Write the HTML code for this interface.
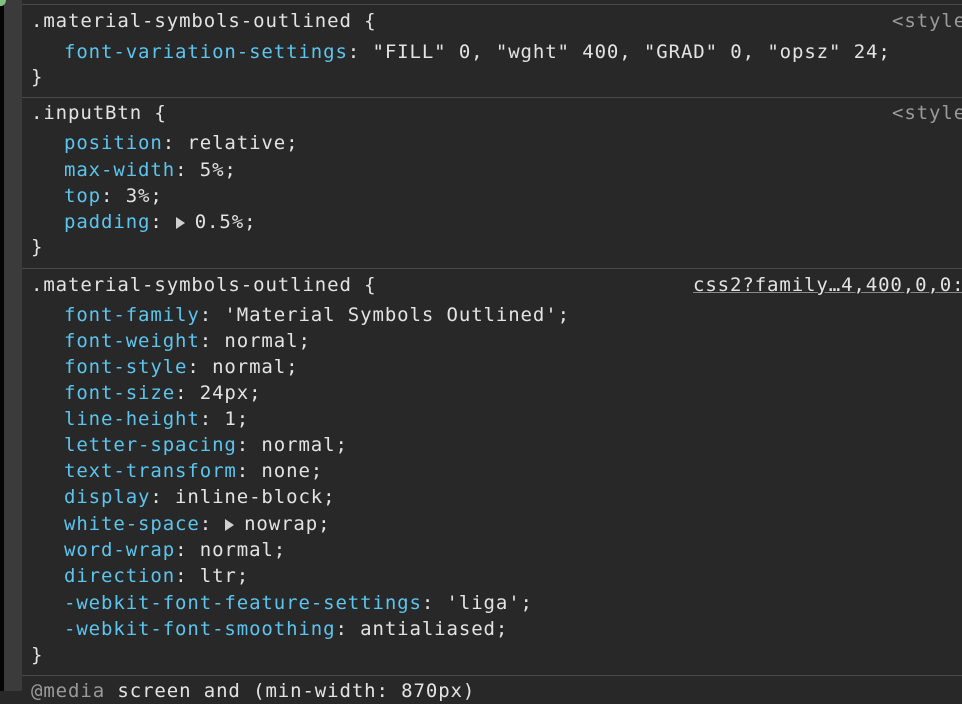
<!DOCTYPE html>
<html><head><style>
body{margin:0;width:962px;height:691px;background:#282828;overflow:hidden;position:relative;font-family:"DejaVu Sans Mono","Liberation Mono",monospace;font-size:19px;letter-spacing:0.9px;color:#e3e3e3}
.l{position:absolute;white-space:pre;line-height:26px;height:26px}
.p{color:#5cc5ef}
.s{left:31px}.i{left:64px}
.sep{position:absolute;left:22px;right:0;height:1px;background:#4a4a4a}
.r{position:absolute;white-space:pre;line-height:26px;color:#9a9a9a}
.tri{display:inline-block;width:0;height:0;border-left:9px solid #d0d0d0;border-top:6px solid transparent;border-bottom:6px solid transparent;margin:0 10px 0 4px;vertical-align:-1px}
</style></head><body>
<div style="position:absolute;left:0;top:0;width:22px;height:691px;background:#3b3b3b"></div>
<div style="position:absolute;left:0;top:0;width:4px;height:691px;background:#050505"></div>
<div style="position:absolute;left:-4px;top:-6px;width:10px;height:12px;border-radius:50%;background:#7fc27f"></div>
<div class="sep" style="top:4px"></div>
<div class="sep" style="top:97px"></div>
<div class="sep" style="top:268px"></div>
<div class="sep" style="top:675px"></div>

<div class="l s" style="top:8px">.material-symbols-outlined {</div>
<div class="r" style="top:8px;left:892px">&lt;style</div>
<div class="l i" style="top:39px"><span class="p">font-variation-settings</span>: "FILL" 0, "wght" 400, "GRAD" 0, "opsz" 24;</div>
<div class="l s" style="top:64px">}</div>

<div class="l s" style="top:100px">.inputBtn {</div>
<div class="r" style="top:100px;left:892px">&lt;style</div>
<div class="l i" style="top:130px"><span class="p">position</span>: relative;</div>
<div class="l i" style="top:157px"><span class="p">max-width</span>: 5%;</div>
<div class="l i" style="top:183px"><span class="p">top</span>: 3%;</div>
<div class="l i" style="top:209px"><span class="p">padding</span>:<span class="tri" style="margin-left:13px"></span>0.5%;</div>
<div class="l s" style="top:234px">}</div>

<div class="l s" style="top:272px">.material-symbols-outlined {</div>
<div class="r" style="top:272px;left:693px;color:#e3e3e3;text-decoration:underline;text-decoration-color:#888">css2?family…4,400,0,0:</div>
<div class="l i" style="top:302px"><span class="p">font-family</span>: 'Material Symbols Outlined';</div>
<div class="l i" style="top:328px"><span class="p">font-weight</span>: normal;</div>
<div class="l i" style="top:354px"><span class="p">font-style</span>: normal;</div>
<div class="l i" style="top:380px"><span class="p">font-size</span>: 24px;</div>
<div class="l i" style="top:406px"><span class="p">line-height</span>: 1;</div>
<div class="l i" style="top:432px"><span class="p">letter-spacing</span>: normal;</div>
<div class="l i" style="top:458px"><span class="p">text-transform</span>: none;</div>
<div class="l i" style="top:484px"><span class="p">display</span>: inline-block;</div>
<div class="l i" style="top:511px"><span class="p">white-space</span>:<span class="tri" style="margin-left:13px"></span>nowrap;</div>
<div class="l i" style="top:537px"><span class="p">word-wrap</span>: normal;</div>
<div class="l i" style="top:563px"><span class="p">direction</span>: ltr;</div>
<div class="l i" style="top:590px"><span class="p">-webkit-font-feature-settings</span>: 'liga';</div>
<div class="l i" style="top:616px"><span class="p">-webkit-font-smoothing</span>: antialiased;</div>
<div class="l s" style="top:642px">}</div>
<div class="l s" style="top:678px"><span style="color:#9a9a9a">@media</span> screen and (min-width: 870px)</div>
</body></html>
